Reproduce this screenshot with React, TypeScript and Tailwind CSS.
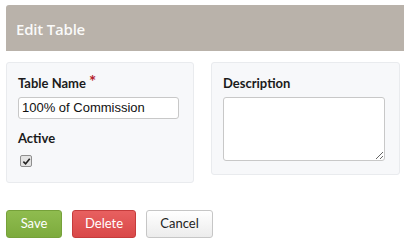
export default function App() {
  return (
    <div className="w-[404px] h-[245px] bg-white pt-[5px] pl-[6px] font-['Lato','Open_Sans',sans-serif]">
      {/* Header */}
      <div className="h-[46px] bg-[#b9b2aa] rounded-tl-[3px] flex items-center pl-[10px]">
        <h1 className="text-[15px] text-white/95 font-semibold font-['Open_Sans',sans-serif] tracking-[-0.2px] pt-[3px]">Edit Table</h1>
      </div>

      {/* Cards */}
      <div className="flex items-start gap-[17px] mt-[11px]">
        <div className="w-[188px] h-[121px] bg-[#f7f8fa] border border-[#e9ebee] rounded-[3px] pl-[11px] pt-[11px]">
          <label className="flex items-start text-[13px] font-bold text-[#1b1b1b]">
            Table Name <span className="text-[#b5202a] text-[17px] leading-none ml-[3px] -mt-[1px]">*</span>
          </label>
          <input
            type="text"
            defaultValue="100% of Commission"
            className="mt-[3px] w-[161px] h-[22px] bg-white border border-[#c8c8c8] rounded-[3px] px-[3px] text-[13px] text-[#111] font-['Liberation_Sans',Arial,sans-serif] outline-none"
          />
          <div className="mt-[10px] text-[13px] font-bold text-[#1b1b1b]">Active</div>
          <div className="mt-[7px] ml-[2px] w-[12px] h-[12px] bg-[#e3e3e3] border border-[#8f8f8f] rounded-[2px] flex items-center justify-center">
            <svg viewBox="0 0 10 10" className="w-[9px] h-[9px]">
              <path d="M1.5 5.2 L4 7.6 L8.6 2" fill="none" stroke="#222" strokeWidth="1.8" />
            </svg>
          </div>
        </div>

        <div className="w-[189px] h-[113px] bg-[#f7f8fa] border border-[#e9ebee] rounded-[3px] pl-[11px] pt-[11px]">
          <div className="text-[13px] font-bold text-[#1b1b1b]">Description</div>
          <textarea className="block mt-[3px] w-[162px] h-[64px] bg-white border border-[#c8c8c8] rounded-[3px] outline-none" />
        </div>
      </div>

      {/* Buttons */}
      <div className="flex gap-[10px] mt-[27px] text-[13px]">
        <button className="w-[56px] h-[28px] rounded-[3px] border border-[#76a13a] bg-gradient-to-b from-[#8fbc4f] to-[#7dab3d] text-white">
          Save
        </button>
        <button className="w-[64px] h-[28px] rounded-[3px] border border-[#c53c3c] bg-gradient-to-b from-[#e86060] to-[#d94848] text-white">
          Delete
        </button>
        <button className="w-[67px] h-[28px] rounded-[3px] border border-[#c6c6c6] bg-gradient-to-b from-white to-[#ececec] text-[#222]">
          Cancel
        </button>
      </div>
    </div>
  )
}
